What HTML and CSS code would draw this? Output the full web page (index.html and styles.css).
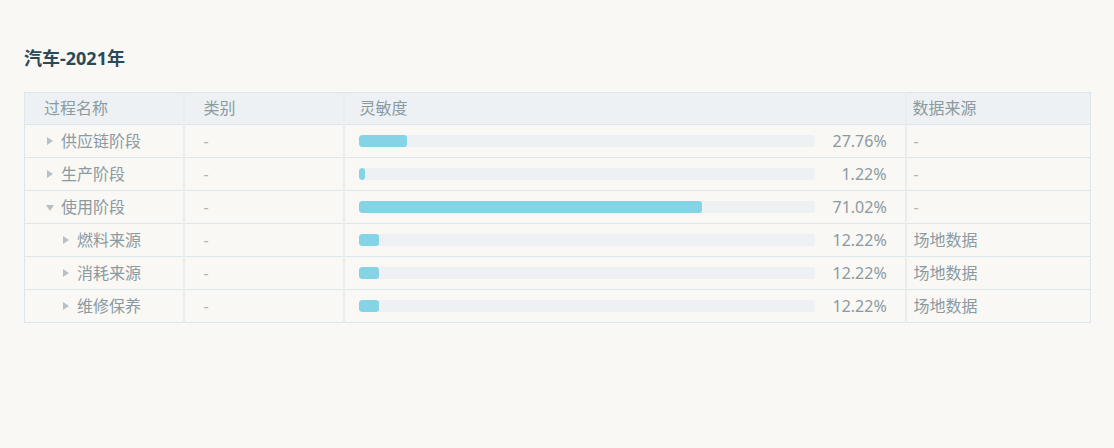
FILE: index.html
```html
<!DOCTYPE html>
<html lang="zh">
<head>
<meta charset="utf-8">
<link rel="stylesheet" href="styles.css">
</head>
<body>
<div class="page">
  <h1 class="title">汽车-2021年</h1>
  <table class="grid">
    <colgroup>
      <col class="c1"><col class="c2"><col class="c3"><col class="c4">
    </colgroup>
    <thead>
      <tr>
        <th class="h-name">过程名称</th>
        <th class="h-type">类别</th>
        <th class="h-sens">灵敏度</th>
        <th class="h-src">数据来源</th>
      </tr>
    </thead>
    <tbody>
      <tr>
        <td class="name"><span class="caret right"></span>供应链阶段</td>
        <td class="type">-</td>
        <td class="sens"><div class="sens-wrap"><div class="track"><div class="fill" style="width:48px"></div></div><span class="pct">27.76%</span></div></td>
        <td class="src dash">-</td>
      </tr>
      <tr>
        <td class="name"><span class="caret right"></span>生产阶段</td>
        <td class="type">-</td>
        <td class="sens"><div class="sens-wrap"><div class="track"><div class="fill" style="width:6px"></div></div><span class="pct">1.22%</span></div></td>
        <td class="src dash">-</td>
      </tr>
      <tr>
        <td class="name"><span class="caret down"></span>使用阶段</td>
        <td class="type">-</td>
        <td class="sens"><div class="sens-wrap"><div class="track"><div class="fill" style="width:343px"></div></div><span class="pct">71.02%</span></div></td>
        <td class="src dash">-</td>
      </tr>
      <tr>
        <td class="name child"><span class="caret right"></span>燃料来源</td>
        <td class="type">-</td>
        <td class="sens"><div class="sens-wrap"><div class="track"><div class="fill" style="width:20px"></div></div><span class="pct">12.22%</span></div></td>
        <td class="src">场地数据</td>
      </tr>
      <tr>
        <td class="name child"><span class="caret right"></span>消耗来源</td>
        <td class="type">-</td>
        <td class="sens"><div class="sens-wrap"><div class="track"><div class="fill" style="width:20px"></div></div><span class="pct">12.22%</span></div></td>
        <td class="src">场地数据</td>
      </tr>
      <tr>
        <td class="name child"><span class="caret right"></span>维修保养</td>
        <td class="type">-</td>
        <td class="sens"><div class="sens-wrap"><div class="track"><div class="fill" style="width:20px"></div></div><span class="pct">12.22%</span></div></td>
        <td class="src">场地数据</td>
      </tr>
    </tbody>
  </table>
</div>
</body>
</html>
```
FILE: styles.css
```css
html, body {
  margin: 0;
  padding: 0;
  background: #f9f8f5;
}
body {
  font-family: "Noto Sans", "Noto Sans CJK SC", sans-serif;
  color: #8b9aa1;
}
.page {
  padding: 44px 24px 0 24px;
}
.title {
  margin: 0 0 20px 0;
  font-size: 18px;
  line-height: 28px;
  font-weight: 700;
  color: #2a4a58;
}
.grid {
  width: 1066px;
  border-collapse: collapse;
  table-layout: fixed;
  font-size: 16px;
  border: 1px solid #dde6ea;
}
.c1 { width: 159px; }
.c2 { width: 160px; }
.c3 { width: 562px; }
.c4 { width: 185px; }
.grid th,
.grid td {
  height: 32px;
  padding: 0;
  text-align: left;
  font-weight: 400;
  border-top: 1px solid #dde6ea;
  border-bottom: 1px solid #dde6ea;
  border-left: 2px solid #e8eef0;
  white-space: nowrap;
  line-height: 32px;
}
.grid thead th {
  height: 31px;
  line-height: 31px;
}
.grid th:first-child,
.grid td:first-child {
  border-left: 1px solid #dde6ea;
}
.grid thead th {
  background: #edf1f3;
  color: #8b9aa1;
}
.h-name { padding-left: 19px !important; }
.h-type { padding-left: 19px !important; }
.h-sens { padding-left: 15px !important; }
.h-src { padding-left: 6px !important; }

.name { padding-left: 20px !important; }
.name.child { padding-left: 36px !important; }
.type { padding-left: 19px !important; color: #a9b5ba; }
.src { padding-left: 7px !important; }
.src.dash { color: #a9b5ba; }

.caret {
  display: inline-block;
  width: 0;
  height: 0;
  vertical-align: middle;
  margin-right: 10px;
  position: relative;
  top: -2px;
}
.caret.right {
  border-top: 4px solid transparent;
  border-bottom: 4px solid transparent;
  border-left: 6px solid #b7c1c5;
  margin-left: 2px;
  margin-right: 8px;
}
.caret.down {
  border-left: 4px solid transparent;
  border-right: 4px solid transparent;
  border-top: 6px solid #b7c1c5;
  margin-left: 1px;
  margin-right: 7px;
  top: -1px;
}
.sens { padding: 0 18px 0 14px !important; }
.sens-wrap {
  display: flex;
  align-items: center;
  gap: 18px;
}
.track {
  flex: 1;
  height: 12px;
  background: #edf1f3;
  border-radius: 3px;
  overflow: hidden;
}
.fill {
  height: 100%;
  background: #84d4e6;
  border-radius: 3px;
}
.pct {
  width: 54px;
  text-align: right;
}
```
